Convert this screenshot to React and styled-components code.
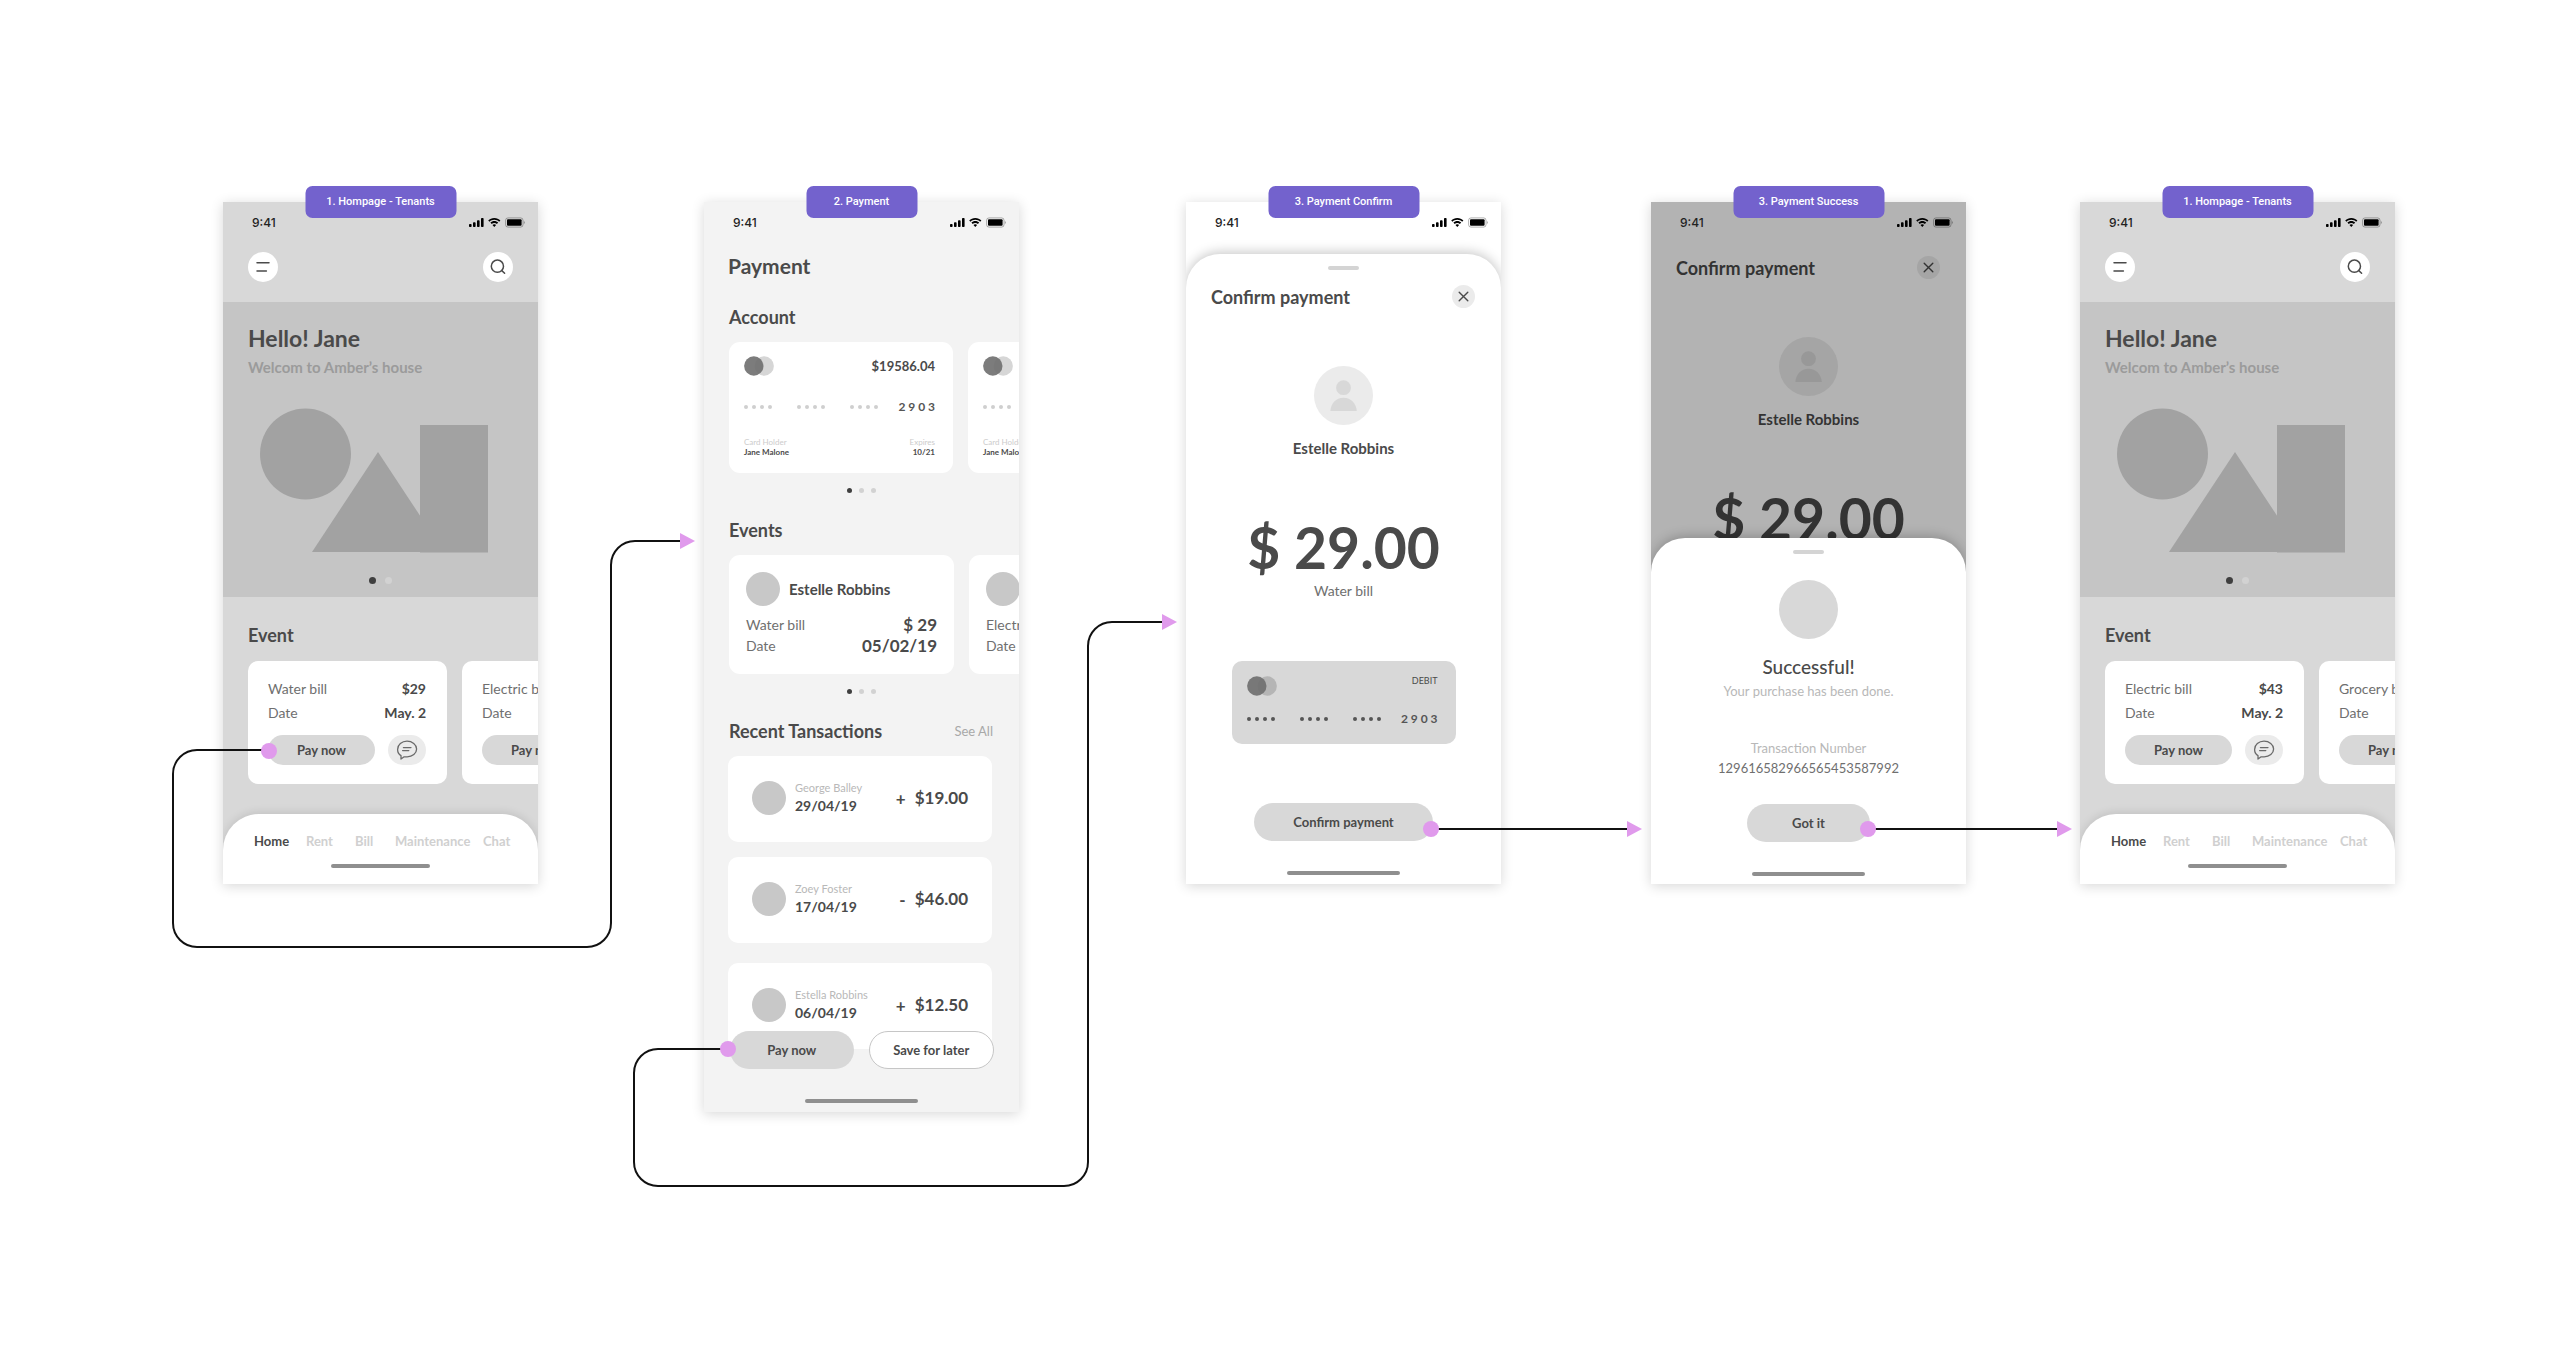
import React from "react";
import styled, { createGlobalStyle } from "styled-components";

const GlobalStyle = createGlobalStyle`
  *, *::before, *::after { box-sizing: border-box; }
  body {
    margin: 0;
    background: #ffffff;
    color: #4a4a4a;
    font-family: Lato, "Open Sans", sans-serif;
  }
  h2, h3, h4, p, ul { margin: 0; padding: 0; }
  ul { list-style: none; }
  button { font: inherit; color: inherit; border: 0; padding: 0; cursor: pointer; }
  a { color: inherit; text-decoration: none; }
  svg { display: block; }
`;

/* ---------- Canvas ---------- */

const Canvas = styled.main`
  display: flex;
  justify-content: center;
  min-height: 100vh;
`;

const Flow = styled.div`
  position: relative;
  display: flex;
  align-items: flex-start;
  flex: none;
  padding: 202px 165px 172px 223px;
`;

const Connectors = styled.svg`
  position: absolute;
  inset: 0;
  width: 100%;
  height: 100%;
  pointer-events: none;
`;

const Frame = styled.section`
  position: relative;
  flex: none;
  width: 315px;
  margin-left: ${(p) => p.$gap || 0}px;
`;

const FrameLabel = styled.h2`
  position: absolute;
  z-index: 2;
  top: -16px;
  left: 50%;
  transform: translateX(-50%);
  width: ${(p) => (p.$compact ? 111 : 151)}px;
  border-radius: 7px;
  background: #7362cd;
  color: #ffffff;
  font: 500 11px/32px Roboto, sans-serif;
  text-align: center;
  white-space: nowrap;
`;

const Screen = styled.div`
  position: relative;
  display: flex;
  flex-direction: column;
  min-height: ${(p) => p.$height || 682}px;
  overflow: hidden;
  background: ${(p) => p.$bg};
  box-shadow: 0 2px 12px rgba(0, 0, 0, 0.16);
`;

/* ---------- Shared parts ---------- */

const StatusRow = styled.div`
  display: flex;
  align-items: center;
  justify-content: space-between;
  height: 42px;
  padding: 0 13px 0 29px;
  color: #222222;
  font: 500 12px/16px Inter, sans-serif;
`;

const SectionTitle = styled.h3`
  font-size: 18px;
  line-height: 22px;
  font-weight: 700;
`;

const Pill = styled.button`
  flex: ${(p) => (p.$width ? "none" : "1")};
  width: ${(p) => (p.$width ? `${p.$width}px` : "auto")};
  height: ${(p) => p.$height || 38}px;
  border-radius: 19px;
  background: #d8d8d8;
  font-size: 13px;
  font-weight: 700;
  line-height: 20px;
`;

const OutlinePill = styled(Pill)`
  background: #ffffff;
  border: 1px solid #c6c6c6;
`;

const DotRow = styled.div`
  display: flex;
  justify-content: center;
  gap: ${(p) => p.$gap}px;
`;

const Dot = styled.span`
  width: ${(p) => p.$size}px;
  height: ${(p) => p.$size}px;
  border-radius: 50%;
  background: ${(p) => (p.$on ? "#3f3f3f" : "#d2d2d2")};
`;

const Carousel = styled.div`
  display: flex;
  gap: 15px;
  overflow: hidden;
`;

const Row = styled.div`
  display: flex;
  align-items: center;
  justify-content: space-between;
`;

const BillName = styled.span`
  color: #6f6f6f;
  font-size: 14px;
  line-height: ${(p) => p.$line || 24}px;
  white-space: nowrap;
`;

const HomeBar = styled.div`
  flex: none;
  align-self: center;
  width: ${(p) => p.$width}px;
  height: 4px;
  margin: 0 auto;
  border-radius: 2px;
  background: #8f8f8f;
`;

const Avatar = styled.span`
  flex: none;
  width: ${(p) => p.$size}px;
  height: ${(p) => p.$size}px;
  border-radius: 50%;
  background: ${(p) => p.$bg || "#c8c8c8"};
  overflow: hidden;
`;

function StatusBar() {
  return (
    <StatusRow>
      <span>9:41</span>
      <svg width="56" height="12" viewBox="0 0 56 12" aria-hidden="true">
        <g fill="#000">
          <rect x="0" y="7" width="2.6" height="3" rx="0.8" />
          <rect x="4" y="5.3" width="2.6" height="4.7" rx="0.8" />
          <rect x="8" y="3.3" width="2.6" height="6.7" rx="0.8" />
          <rect x="12" y="1" width="2.6" height="9" rx="0.8" />
          <path d="M25.3 1C22.9 1 20.8 1.9 19.2 3.4L20.5 4.7C21.7 3.5 23.4 2.8 25.3 2.8S28.9 3.5 30.1 4.7L31.4 3.4C29.8 1.9 27.7 1 25.3 1Z" />
          <path d="M25.3 4.1C23.8 4.1 22.4 4.7 21.4 5.6L22.7 6.9C23.4 6.3 24.3 5.9 25.3 5.9S27.2 6.3 27.9 6.9L29.2 5.6C28.2 4.7 26.8 4.1 25.3 4.1Z" />
          <path d="M25.3 7.2C24.6 7.2 24 7.5 23.5 7.9L25.3 9.9L27.1 7.9C26.6 7.5 26 7.2 25.3 7.2Z" />
          <rect x="38" y="2.3" width="14.6" height="6.4" rx="1" />
        </g>
        <rect x="36.6" y="0.9" width="17.4" height="9.2" rx="2.4" fill="none" stroke="#000" strokeOpacity="0.3" />
        <path d="M54.9 4v3c.7-.3 1-.9 1-1.5s-.3-1.2-1-1.5Z" fill="#000" fillOpacity="0.35" />
      </svg>
    </StatusRow>
  );
}

/* ---------- Home ---------- */

const HomeHeader = styled.header`
  display: flex;
  justify-content: space-between;
  padding: 8px 25px 20px;
`;

const RoundButton = styled.button`
  display: grid;
  place-items: center;
  width: 30px;
  height: 30px;
  border-radius: 50%;
  background: #ffffff;
`;

const Hero = styled.div`
  display: flex;
  flex-direction: column;
  padding: 22px 25px 13px;
  background: #c5c5c5;
`;

const HeroTitle = styled.h3`
  font-size: 23px;
  line-height: 28px;
  font-weight: 700;
`;

const HeroText = styled.p`
  margin-top: 5px;
  color: #9b9b9b;
  font-size: 15px;
  line-height: 20px;
  font-weight: 700;
`;

const Shapes = styled.svg`
  margin: 31px 0 24px 11px;
  width: 230px;
  height: 145px;
  fill: #a2a2a2;
`;

const EventBlock = styled.div`
  padding: 27px 0 29px 25px;

  ${SectionTitle} { margin-bottom: 15px; }
`;

const BillCard = styled.article`
  flex: none;
  width: 199px;
  padding: 16px 21px 19px 20px;
  border-radius: 10px;
  background: #ffffff;
`;

const BillValue = styled.span`
  font-size: 14px;
  line-height: 24px;
  font-weight: 700;
`;

const BillActions = styled.div`
  display: flex;
  gap: 13px;
  margin-top: 10px;
`;

const ChatButton = styled.button`
  display: grid;
  place-items: center;
  width: 38px;
  height: 30px;
  border-radius: 15px;
  background: #ebebeb;
`;

const TabBar = styled.nav`
  margin-top: auto;
  padding: 16px 0;
  border-radius: 36px 36px 0 0;
  background: #ffffff;
  box-shadow: 0 -2px 8px rgba(0, 0, 0, 0.1);
`;

const Tabs = styled.div`
  display: grid;
  grid-template-columns: 52px 49px 40px 88px auto;
  margin-bottom: 12px;
  padding-left: 31px;
`;

const Tab = styled.a`
  color: ${(p) => (p.$active ? "#4a4a4a" : "#d0d0d0")};
  font-size: 13px;
  line-height: 22px;
  font-weight: 700;
`;

function Bill({ name, amount }) {
  return (
    <BillCard>
      <Row>
        <BillName>{name}</BillName>
        <BillValue>{amount}</BillValue>
      </Row>
      <Row>
        <BillName>Date</BillName>
        <BillValue>May. 2</BillValue>
      </Row>
      <BillActions>
        <Pill type="button" $height={30}>Pay now</Pill>
        <ChatButton type="button" aria-label="Chat">
          <svg width="22" height="20" viewBox="0 0 22 20" fill="none" stroke="#6a6a6a" strokeWidth="1.3" strokeLinecap="round" strokeLinejoin="round">
            <path d="M5 19V15.6C2.9 14.3 1.6 12 1.6 9.4C1.6 4.9 5.8 1.2 11 1.2S20.6 4.7 20.6 9S16.4 16.8 11.2 16.8C9.9 16.8 8.8 16.7 7.8 16.9Z" />
            <path d="M7.4 7.6H15M6.6 10.6H12.8" />
          </svg>
        </ChatButton>
      </BillActions>
    </BillCard>
  );
}

function HomeScreen({ gap, bills }) {
  return (
    <Frame $gap={gap}>
      <FrameLabel>1. Hompage - Tenants</FrameLabel>
      <Screen $bg="#d8d8d8">
        <StatusBar />
        <HomeHeader>
          <RoundButton type="button" aria-label="Menu">
            <svg width="14" height="12" viewBox="0 0 14 12" stroke="#4a4a4a" strokeWidth="1.5" strokeLinecap="round">
              <path d="M1 1.8H13M1 10H10.4" />
            </svg>
          </RoundButton>
          <RoundButton type="button" aria-label="Search">
            <svg width="16" height="16" viewBox="0 0 16 16" fill="none" stroke="#4a4a4a" strokeWidth="1.5" strokeLinecap="round">
              <circle cx="7.4" cy="7.2" r="6.1" />
              <path d="M11.8 11.6L14.6 14.2" />
            </svg>
          </RoundButton>
        </HomeHeader>
        <Hero>
          <HeroTitle>Hello! Jane</HeroTitle>
          <HeroText>Welcom to Amber’s house</HeroText>
          <Shapes viewBox="0 0 230 145" aria-hidden="true">
            <circle cx="46.5" cy="46" r="45.5" />
            <path d="M119 44L185 144H53Z" />
            <rect x="161" y="17" width="68" height="127.5" />
          </Shapes>
          <DotRow $gap={9}>
            <Dot $size={7} $on />
            <Dot $size={7} />
          </DotRow>
        </Hero>
        <EventBlock>
          <SectionTitle>Event</SectionTitle>
          <Carousel>
            {bills.map((b) => <Bill key={b.name} {...b} />)}
          </Carousel>
        </EventBlock>
        <TabBar>
          <Tabs>
            {["Home", "Rent", "Bill", "Maintenance", "Chat"].map((t) => (
              <Tab key={t} href="#" $active={t === "Home"}>{t}</Tab>
            ))}
          </Tabs>
          <HomeBar $width={99} />
        </TabBar>
      </Screen>
    </Frame>
  );
}

/* ---------- Payment ---------- */

const PaymentBody = styled.div`
  padding: 8px 0 0 25px;
`;

const PageTitle = styled.h3`
  margin: 0 0 26px -1px;
  font-size: 21px;
  line-height: 28px;
  font-weight: 700;
`;

const PaySection = styled.div`
  margin-bottom: ${(p) => p.$after}px;

  ${SectionTitle} { margin-bottom: 14px; }
  ${DotRow} { width: 264px; margin-top: 15px; }
`;

const AccountCard = styled.article`
  flex: none;
  width: 224px;
  height: 131px;
  padding: 14px 18px 15px 15px;
  border-radius: 11px;
  background: #ffffff;
`;

const Balance = styled.span`
  font-size: 13px;
  line-height: 20px;
  font-weight: 700;
`;

const CardNumber = styled.div`
  display: flex;
  align-items: center;
  justify-content: space-between;
  font-size: 12px;
  line-height: 20px;
  font-weight: 700;
`;

const MaskGroups = styled.div`
  display: flex;
  gap: 25px;
`;

const Mask = styled.span`
  display: flex;
  gap: 4px;
  width: 28px;

  i {
    width: 4px;
    height: 4px;
    border-radius: 50%;
    background: ${(p) => p.$color};
  }
`;

const LastDigits = styled.span`
  color: #555555;
  white-space: nowrap;
`;

const CardCaption = styled.span`
  color: #cccccc;
  font-size: 8px;
  line-height: 10px;
`;

const CardDetail = styled.span`
  font-size: 8px;
  line-height: 10px;
  font-weight: 700;
`;

const EventCard = styled.article`
  flex: none;
  width: 225px;
  padding: 17px 17px 18px;
  border-radius: 11px;
  background: #ffffff;
`;

const Person = styled.div`
  display: flex;
  align-items: center;
  gap: 9px;
  margin-bottom: 8px;
`;

const PersonName = styled.h4`
  font-size: 15px;
  line-height: 20px;
  font-weight: 700;
  white-space: nowrap;
`;

const EventValue = styled.span`
  font-size: 17px;
  line-height: 21px;
  font-weight: 700;
`;

const SectionHead = styled(Row)`
  padding-right: 26px;

  a {
    margin-bottom: 14px;
    color: #a8a8a8;
    font-size: 13px;
    line-height: 22px;
  }
`;

const Transactions = styled.ul`
  display: flex;
  flex-direction: column;
  width: 264px;
  margin-left: -1px;
`;

const Transaction = styled.li`
  display: flex;
  align-items: center;
  height: 86px;
  margin-bottom: 15px;
  padding: 0 24px 2px;
  border-radius: 10px;
  background: #ffffff;

  &:last-child { margin: 5px 0 0; }
`;

const TxInfo = styled.div`
  flex: 1;
  margin-left: 9px;
  padding-bottom: 2px;
`;

const TxName = styled.p`
  color: #b8b8b8;
  font-size: 11px;
  line-height: 18px;
`;

const TxDate = styled.p`
  font-size: 14px;
  line-height: 18px;
  font-weight: 700;
`;

const TxSign = styled.span`
  margin-right: 9px;
  font-size: 17px;
  font-weight: 700;
`;

const TxAmount = styled.span`
  font-size: 17px;
  line-height: 22px;
  font-weight: 700;
`;

const ActionBar = styled.div`
  position: relative;
  display: flex;
  gap: 15px;
  margin: -18px 25px 30px 26px;
`;

function CardLogo({ dark }) {
  return (
    <svg width="30" height="20" viewBox="0 0 30 20" aria-label="Card brand">
      <circle cx="20.2" cy="10" r="9.7" fill={dark ? "#b5b5b5" : "#d6d6d6"} />
      <circle cx="9.8" cy="10" r="9.7" fill="#6e6e6e" fillOpacity="0.9" />
    </svg>
  );
}

function MaskedNumber({ color }) {
  return (
    <CardNumber>
      <MaskGroups>
        {[0, 1, 2].map((g) => (
          <Mask key={g} $color={color}><i /><i /><i /><i /></Mask>
        ))}
      </MaskGroups>
      <LastDigits>2 9 0 3</LastDigits>
    </CardNumber>
  );
}

const AccountRows = styled.div`
  display: flex;
  flex-direction: column;
  height: 100%;

  ${CardNumber} { margin: 21px 0 20px; }
`;

function Account() {
  return (
    <AccountCard>
      <AccountRows>
        <Row><CardLogo /><Balance>$19586.04</Balance></Row>
        <MaskedNumber color="#cfcfcf" />
        <Row><CardCaption>Card Holder</CardCaption><CardCaption>Expires</CardCaption></Row>
        <Row><CardDetail>Jane Malone</CardDetail><CardDetail>10/21</CardDetail></Row>
      </AccountRows>
    </AccountCard>
  );
}

function Event({ name, bill, amount }) {
  return (
    <EventCard>
      <Person><Avatar $size={34} /><PersonName>{name}</PersonName></Person>
      <Row><BillName $line={21}>{bill}</BillName><EventValue>{amount}</EventValue></Row>
      <Row><BillName $line={21}>Date</BillName><EventValue>05/02/19</EventValue></Row>
    </EventCard>
  );
}

function Pager() {
  return (
    <DotRow $gap={7}>
      <Dot $size={5} $on /><Dot $size={5} /><Dot $size={5} />
    </DotRow>
  );
}

const transactions = [
  { name: "George Balley", date: "29/04/19", sign: "+", amount: "$19.00" },
  { name: "Zoey Foster", date: "17/04/19", sign: "-", amount: "$46.00" },
  { name: "Estella Robbins", date: "06/04/19", sign: "+", amount: "$12.50" },
];

function PaymentScreen() {
  return (
    <Frame $gap={166}>
      <FrameLabel $compact>2. Payment</FrameLabel>
      <Screen $bg="#f3f3f3" $height={910}>
        <StatusBar />
        <PaymentBody>
          <PageTitle>Payment</PageTitle>
          <PaySection $after={26}>
            <SectionTitle>Account</SectionTitle>
            <Carousel><Account /><Account /></Carousel>
            <Pager />
          </PaySection>
          <PaySection $after={26}>
            <SectionTitle>Events</SectionTitle>
            <Carousel>
              <Event name="Estelle Robbins" bill="Water bill" amount="$ 29" />
              <Event name="Estelle Robbins" bill="Electric bill" amount="$ 43" />
            </Carousel>
            <Pager />
          </PaySection>
          <PaySection $after={0}>
            <SectionHead>
              <SectionTitle>Recent Tansactions</SectionTitle>
              <a href="#">See All</a>
            </SectionHead>
            <Transactions>
              {transactions.map((t) => (
                <Transaction key={t.date}>
                  <Avatar $size={34} />
                  <TxInfo><TxName>{t.name}</TxName><TxDate>{t.date}</TxDate></TxInfo>
                  <TxSign>{t.sign}</TxSign>
                  <TxAmount>{t.amount}</TxAmount>
                </Transaction>
              ))}
            </Transactions>
          </PaySection>
        </PaymentBody>
        <ActionBar>
          <Pill type="button">Pay now</Pill>
          <OutlinePill type="button">Save for later</OutlinePill>
        </ActionBar>
        <HomeBar $width={113} />
      </Screen>
    </Frame>
  );
}

/* ---------- Confirm and success ---------- */

const Sheet = styled.div`
  display: flex;
  flex-direction: column;
  align-items: center;
  flex: 1;
  margin-top: 10px;
  padding: 12px 0 8px;
  border-radius: 34px 34px 0 0;
  background: #ffffff;
  box-shadow: 0 -2px 12px rgba(0, 0, 0, 0.22);
`;

const BottomSheet = styled(Sheet)`
  position: absolute;
  inset: auto 0 0;
`;

const Handle = styled.div`
  width: 31px;
  height: 4px;
  border-radius: 2px;
  background: #d4d4d4;
`;

const ConfirmHead = styled.div`
  display: flex;
  align-items: center;
  justify-content: space-between;
  align-self: stretch;
  padding: 0 26px 0 25px;
  margin: ${(p) => p.$top}px 0 58px;
`;

const CloseButton = styled.button`
  display: grid;
  place-items: center;
  width: 23px;
  height: 23px;
  border-radius: 50%;
  background: ${(p) => (p.$dim ? "#a5a5a5" : "#ebebeb")};
`;

const PayeeName = styled.h4`
  margin: 13px 0 55px;
  font-size: 15px;
  line-height: 20px;
  font-weight: 700;
`;

const Amount = styled.p`
  font-size: 57px;
  line-height: 68px;
  font-weight: 700;
`;

const DimScreen = styled.div`
  display: flex;
  flex-direction: column;
  align-items: center;
  color: #333333;
`;

const AmountCaption = styled(BillName)`
  margin: -2px 0 58px;
`;

const DebitCard = styled.div`
  display: flex;
  flex-direction: column;
  gap: 13px;
  width: 224px;
  height: 83px;
  margin-bottom: 59px;
  padding: 15px 18px 0 15px;
  border-radius: 10px;
  background: #d8d8d8;
`;

const Debit = styled.span`
  align-self: flex-start;
  font-size: 9px;
  line-height: 10px;
`;

const SheetFoot = styled.div`
  margin-top: 30px;
`;

function Payee({ dim, top }) {
  return (
    <>
      <ConfirmHead $top={top}>
        <SectionTitle>Confirm payment</SectionTitle>
        <CloseButton type="button" aria-label="Close" $dim={dim}>
          <svg width="11" height="11" viewBox="0 0 11 11" stroke={dim ? "#333" : "#4a4a4a"} strokeWidth="1.4" strokeLinecap="round">
            <path d="M1.2 1.2L9.8 9.8M9.8 1.2L1.2 9.8" />
          </svg>
        </CloseButton>
      </ConfirmHead>
      <Avatar $size={59} $bg={dim ? "#a5a5a5" : "#ebebeb"}>
        <svg width="59" height="59" viewBox="0 0 59 59" fill={dim ? "#989898" : "#d8d8d8"}>
          <circle cx="29.5" cy="21.7" r="7.4" />
          <path d="M16.4 45C16.8 37.6 22 31.8 29.5 31.8S42.2 37.6 42.8 45Z" />
        </svg>
      </Avatar>
      <PayeeName>Estelle Robbins</PayeeName>
      <Amount>$ 29.00</Amount>
    </>
  );
}

function ConfirmScreen() {
  return (
    <Frame $gap={167}>
      <FrameLabel>3. Payment Confirm</FrameLabel>
      <Screen $bg="#ffffff">
        <StatusBar />
        <Sheet>
          <Handle />
          <Payee top={15} />
          <AmountCaption>Water bill</AmountCaption>
          <DebitCard>
            <Row><CardLogo dark /><Debit>DEBIT</Debit></Row>
            <MaskedNumber color="#555555" />
          </DebitCard>
          <Pill type="button" $width={179}>Confirm payment</Pill>
          <SheetFoot><HomeBar $width={113} /></SheetFoot>
        </Sheet>
      </Screen>
    </Frame>
  );
}

const SuccessTitle = styled.h3`
  margin: 16px 0 2px;
  font-size: 19px;
  line-height: 24px;
  font-weight: 500;
`;

const Muted = styled.p`
  margin-bottom: ${(p) => p.$after || 0}px;
  color: #b8b8b8;
  font-size: 13px;
  line-height: 20px;
`;

const TxNumber = styled.p`
  margin-bottom: 26px;
  color: #6f6f6f;
  font-size: 13px;
  line-height: 20px;
`;

const SuccessMark = styled(Avatar)`
  margin-top: 26px;
`;

function SuccessScreen() {
  return (
    <Frame $gap={150}>
      <FrameLabel>3. Payment Success</FrameLabel>
      <Screen $bg="#b3b3b3">
        <StatusBar />
        <DimScreen><Payee dim top={12} /></DimScreen>
        <BottomSheet>
          <Handle />
          <SuccessMark $size={59} $bg="#d8d8d8" />
          <SuccessTitle>Successful!</SuccessTitle>
          <Muted $after={37}>Your purchase has been done.</Muted>
          <Muted>Transaction Number</Muted>
          <TxNumber>129616582966565453587992</TxNumber>
          <Pill type="button" $width={123}>Got it</Pill>
          <SheetFoot><HomeBar $width={113} /></SheetFoot>
        </BottomSheet>
      </Screen>
    </Frame>
  );
}

/* ---------- Flow arrows ---------- */

function FlowLines() {
  return (
    <Connectors aria-hidden="true">
      <g fill="none" stroke="#111111" strokeWidth="2">
        <path d="M269 750H197A24 24 0 0 0 173 774V923A24 24 0 0 0 197 947H587A24 24 0 0 0 611 923V565A24 24 0 0 1 635 541H682" />
        <path d="M728 1049H658A24 24 0 0 0 634 1073V1162A24 24 0 0 0 658 1186H1064A24 24 0 0 0 1088 1162V646A24 24 0 0 1 1112 622H1164" />
        <path d="M1431 829H1630" />
        <path d="M1868 829H2060" />
      </g>
      <g fill="#e09aec">
        <circle cx="269" cy="751" r="8" />
        <circle cx="728" cy="1049" r="8" />
        <circle cx="1431" cy="829" r="8" />
        <circle cx="1868" cy="829" r="8" />
        <path d="M680 533L695 541L680 549Z" />
        <path d="M1162 614L1177 622L1162 630Z" />
        <path d="M1627 821L1642 829L1627 837Z" />
        <path d="M2057 821L2072 829L2057 837Z" />
      </g>
    </Connectors>
  );
}

export default function App() {
  return (
    <>
      <GlobalStyle />
      <Canvas>
        <Flow>
          <HomeScreen bills={[{ name: "Water bill", amount: "$29" }, { name: "Electric bill", amount: "$43" }]} />
          <PaymentScreen />
          <ConfirmScreen />
          <SuccessScreen />
          <HomeScreen gap={114} bills={[{ name: "Electric bill", amount: "$43" }, { name: "Grocery bill", amount: "$35" }]} />
          <FlowLines />
        </Flow>
      </Canvas>
    </>
  );
}
